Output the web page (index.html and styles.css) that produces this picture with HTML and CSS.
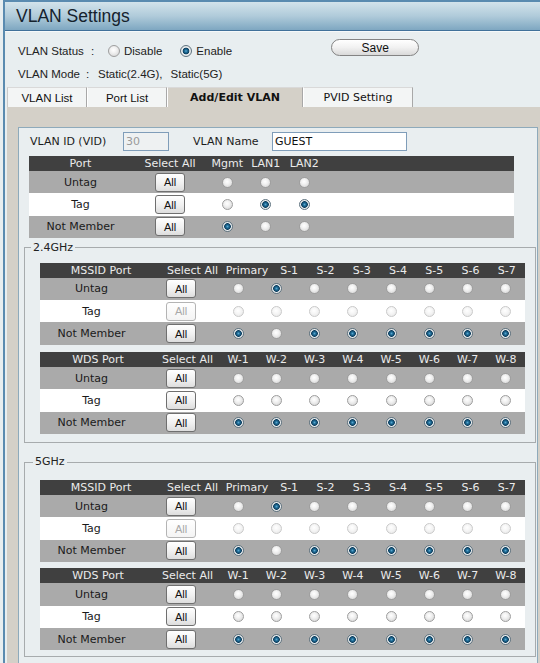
FILE: index.html
```html
<!DOCTYPE html>
<html>
<head>
<meta charset="utf-8">
<title>VLAN Settings</title>
<link rel="stylesheet" href="styles.css">
</head>
<body>
<div class="page">
  <div class="titlebar"><h1 class="title">VLAN Settings</h1></div>

  <div class="status">
    <div class="srow">
      <span class="slabel">VLAN Status</span><span class="colon">:</span>
      <label class="opt"><input type="radio" class="rd rd-lg"><span class="opt-txt">Disable</span></label>
      <label class="opt"><input type="radio" class="rd rd-lg" checked><span class="opt-txt">Enable</span></label>
      <button class="save">Save</button>
    </div>
    <div class="srow2">
      <span class="slabel2">VLAN Mode</span><span class="colon2">:</span>
      <span class="mode">Static(2.4G),</span><span class="mode mode2">Static(5G)</span>
    </div>
  </div>

  <div class="tabs">
    <div class="tab tab-first w80">VLAN List</div>
    <div class="tab w80">Port List</div>
    <div class="tab tab-active w136">Add/Edit VLAN</div>
    <div class="tab tab-pvid w110">PVID Setting</div>
  </div>

  <div class="panel">
    <div class="box">
      <div class="frow">
        <span class="flbl">VLAN ID (VID)</span>
        <input class="in in-id" type="text" value="30" disabled>
        <span class="flbl flbl2">VLAN Name</span>
        <input class="in in-name" type="text" value="GUEST">
      </div>

      <div class="tbl tbl-port">
        <div class="grid hdr cols-port">
          <span>Port</span><span>Select All</span><span>Mgmt</span><span>LAN1</span><span>LAN2</span><span></span>
        </div>
        <div class="grid row cols-port">
          <span class="lbl">Untag</span><button class="all">All</button>
          <input type="radio" class="rd"><input type="radio" class="rd"><input type="radio" class="rd">
        </div>
        <div class="grid row alt cols-port">
          <span class="lbl">Tag</span><button class="all">All</button>
          <input type="radio" class="rd"><input type="radio" class="rd" checked><input type="radio" class="rd" checked>
        </div>
        <div class="grid row cols-port">
          <span class="lbl">Not Member</span><button class="all">All</button>
          <input type="radio" class="rd" checked><input type="radio" class="rd"><input type="radio" class="rd">
        </div>
      </div>

      <fieldset class="band">
        <legend class="legend">2.4GHz</legend>
        <div class="tbl">
          <div class="grid hdr cols-mh">
            <span>MSSID Port</span><span>Select All</span><span>Primary</span><span>S-1</span><span>S-2</span><span>S-3</span><span>S-4</span><span>S-5</span><span>S-6</span><span>S-7</span>
          </div>
          <div class="grid row cols-body">
            <span class="lbl">Untag</span><button class="all">All</button>
            <input type="radio" class="rd"><input type="radio" class="rd" checked><input type="radio" class="rd"><input type="radio" class="rd"><input type="radio" class="rd"><input type="radio" class="rd"><input type="radio" class="rd"><input type="radio" class="rd">
          </div>
          <div class="grid row alt cols-body">
            <span class="lbl">Tag</span><button class="all" disabled>All</button>
            <input type="radio" class="rd" disabled><input type="radio" class="rd" disabled><input type="radio" class="rd" disabled><input type="radio" class="rd" disabled><input type="radio" class="rd" disabled><input type="radio" class="rd" disabled><input type="radio" class="rd" disabled><input type="radio" class="rd" disabled>
          </div>
          <div class="grid row cols-body">
            <span class="lbl">Not Member</span><button class="all">All</button>
            <input type="radio" class="rd" checked><input type="radio" class="rd"><input type="radio" class="rd" checked><input type="radio" class="rd" checked><input type="radio" class="rd" checked><input type="radio" class="rd" checked><input type="radio" class="rd" checked><input type="radio" class="rd" checked>
          </div>
        </div>
        <div class="tbl tbl-wds">
          <div class="grid hdr cols-wh">
            <span>WDS Port</span><span>Select All</span><span>W-1</span><span>W-2</span><span>W-3</span><span>W-4</span><span>W-5</span><span>W-6</span><span>W-7</span><span>W-8</span>
          </div>
          <div class="grid row cols-body">
            <span class="lbl">Untag</span><button class="all">All</button>
            <input type="radio" class="rd"><input type="radio" class="rd"><input type="radio" class="rd"><input type="radio" class="rd"><input type="radio" class="rd"><input type="radio" class="rd"><input type="radio" class="rd"><input type="radio" class="rd">
          </div>
          <div class="grid row alt cols-body">
            <span class="lbl">Tag</span><button class="all">All</button>
            <input type="radio" class="rd"><input type="radio" class="rd"><input type="radio" class="rd"><input type="radio" class="rd"><input type="radio" class="rd"><input type="radio" class="rd"><input type="radio" class="rd"><input type="radio" class="rd">
          </div>
          <div class="grid row cols-body">
            <span class="lbl">Not Member</span><button class="all">All</button>
            <input type="radio" class="rd" checked><input type="radio" class="rd" checked><input type="radio" class="rd" checked><input type="radio" class="rd" checked><input type="radio" class="rd" checked><input type="radio" class="rd" checked><input type="radio" class="rd" checked><input type="radio" class="rd" checked>
          </div>
        </div>
      </fieldset>

      <fieldset class="band band-5g">
        <legend class="legend legend-5g">5GHz</legend>
        <div class="tbl">
          <div class="grid hdr cols-mh">
            <span>MSSID Port</span><span>Select All</span><span>Primary</span><span>S-1</span><span>S-2</span><span>S-3</span><span>S-4</span><span>S-5</span><span>S-6</span><span>S-7</span>
          </div>
          <div class="grid row cols-body">
            <span class="lbl">Untag</span><button class="all">All</button>
            <input type="radio" class="rd"><input type="radio" class="rd" checked><input type="radio" class="rd"><input type="radio" class="rd"><input type="radio" class="rd"><input type="radio" class="rd"><input type="radio" class="rd"><input type="radio" class="rd">
          </div>
          <div class="grid row alt cols-body">
            <span class="lbl">Tag</span><button class="all" disabled>All</button>
            <input type="radio" class="rd" disabled><input type="radio" class="rd" disabled><input type="radio" class="rd" disabled><input type="radio" class="rd" disabled><input type="radio" class="rd" disabled><input type="radio" class="rd" disabled><input type="radio" class="rd" disabled><input type="radio" class="rd" disabled>
          </div>
          <div class="grid row cols-body">
            <span class="lbl">Not Member</span><button class="all">All</button>
            <input type="radio" class="rd" checked><input type="radio" class="rd"><input type="radio" class="rd" checked><input type="radio" class="rd" checked><input type="radio" class="rd" checked><input type="radio" class="rd" checked><input type="radio" class="rd" checked><input type="radio" class="rd" checked>
          </div>
        </div>
        <div class="tbl tbl-wds tbl-wds-5g">
          <div class="grid hdr cols-wh">
            <span>WDS Port</span><span>Select All</span><span>W-1</span><span>W-2</span><span>W-3</span><span>W-4</span><span>W-5</span><span>W-6</span><span>W-7</span><span>W-8</span>
          </div>
          <div class="grid row cols-body">
            <span class="lbl">Untag</span><button class="all">All</button>
            <input type="radio" class="rd"><input type="radio" class="rd"><input type="radio" class="rd"><input type="radio" class="rd"><input type="radio" class="rd"><input type="radio" class="rd"><input type="radio" class="rd"><input type="radio" class="rd">
          </div>
          <div class="grid row alt cols-body">
            <span class="lbl">Tag</span><button class="all">All</button>
            <input type="radio" class="rd"><input type="radio" class="rd"><input type="radio" class="rd"><input type="radio" class="rd"><input type="radio" class="rd"><input type="radio" class="rd"><input type="radio" class="rd"><input type="radio" class="rd">
          </div>
          <div class="grid row cols-body">
            <span class="lbl">Not Member</span><button class="all">All</button>
            <input type="radio" class="rd" checked><input type="radio" class="rd" checked><input type="radio" class="rd" checked><input type="radio" class="rd" checked><input type="radio" class="rd" checked><input type="radio" class="rd" checked><input type="radio" class="rd" checked><input type="radio" class="rd" checked>
          </div>
        </div>
      </fieldset>
    </div>
  </div>
</div>
</body>
</html>
```

FILE: styles.css
```css
html, body {
  margin: 0;
  padding: 0;
  overflow: hidden;
}
body {
  background: #e8eef0;
  font-family: "Liberation Sans", Arial, sans-serif;
  color: #1c1c1c;
}
.page {
  margin-left: 3px;
  width: 535px;
  height: 663px;
  border-left: 2px solid #5a8bb0;
  border-top: 2px solid #5a8bb0;
  overflow: hidden;
}
.titlebar {
  height: 28px;
  background: linear-gradient(#d3e3eb, #b0cbda 50%, #7ea7c1);
  border-bottom: 1px solid #41719a;
  box-shadow: 0 1px 0 #f6f9fa;
  padding-left: 11px;
  display: flex;
  align-items: center;
}
.title {
  margin: 0;
  font-weight: normal;
  font-size: 17.5px;
  font-family: "Liberation Sans", Arial, sans-serif;
  color: #15222d;
}

/* status area */
.status {
  padding-left: 13px;
  font-size: 11.5px;
  color: #222;
}
.srow {
  display: flex;
  align-items: center;
  height: 18px;
  margin-top: 11px;
}
.slabel { width: 73px; white-space: nowrap; }
.colon { width: 17px; }
.opt {
  display: flex;
  align-items: center;
  margin-right: 18px;
}
.opt-txt { margin-left: 4px; }
.save {
  align-self: flex-start;
  margin-top: -3px;
  margin-left: 81px;
  width: 88px;
  height: 17px;
  padding: 0;
  border: 1px solid #838383;
  border-radius: 9px;
  background: linear-gradient(#ffffff, #f1f1f1 50%, #d9d9d9);
  font-family: "Liberation Sans", Arial, sans-serif;
  font-size: 12px;
  color: #111;
}
.srow2 {
  display: flex;
  align-items: center;
  height: 16px;
  margin-top: 6px;
}
.slabel2 { width: 68px; white-space: nowrap; }
.colon2 { width: 12px; }
.mode2 { margin-left: 8px; }

/* tabs */
.tabs {
  display: flex;
  margin-left: 2px;
  margin-top: 5px;
  height: 20px;
}
.tab {
  box-sizing: border-box;
  height: 20px;
  display: flex;
  align-items: center;
  justify-content: center;
  background: #f3f5f5;
  border-top: 1px solid #d9d9d9;
  border-left: 1px solid #ffffff;
  border-right: 1px solid #a8a8a8;
  font-size: 11.5px;
  color: #111;
}
.tab-first { border-left: 1px solid #c9c9c9; }
.tab-active {
  background: #d4d0c8;
  font-family: "DejaVu Sans", Verdana, sans-serif;
  font-weight: bold;
  font-size: 11px;
}
.tab-pvid {
  font-family: "DejaVu Sans", Verdana, sans-serif;
  font-size: 11px;
}
.w80 { width: 80px; }
.w136 { width: 136px; }
.w110 { width: 110px; }

/* panel */
.panel {
  margin-left: 2px;
  background: #d4d0c8;
  padding: 20px 0 0 11px;
  height: 600px;
}
.box {
  width: 520px;
  box-sizing: border-box;
  border: 1px solid #8eaabb;
  background: #e9eef0;
  padding: 4px 0 12px;
  font-family: "DejaVu Sans", Verdana, sans-serif;
  font-size: 11px;
  color: #1c1c1c;
}
.frow {
  display: flex;
  align-items: center;
  height: 19px;
  margin-left: 11px;
  margin-bottom: 5px;
}
.flbl { width: 93px; white-space: nowrap; }
.flbl2 { margin-left: 24px; width: 79px; }
.in {
  box-sizing: border-box;
  height: 19px;
  border: 1px solid #7f9db9;
  font-family: "DejaVu Sans", Verdana, sans-serif;
  font-size: 11px;
  padding: 0 2px;
  margin: 0;
}
.in-id {
  width: 46px;
  background: #eef1f2;
  color: #9a9a9a;
}
.in-name {
  width: 135px;
  background: #fff;
  color: #111;
}

/* tables */
.tbl { width: 485px; }
.tbl-port { margin-left: 10px; }
.tbl-wds { margin-top: 7px; }
.tbl-wds-5g { margin-top: 6px; }
.grid { display: grid; width: 485px; }
.hdr {
  height: 15px;
  line-height: 15px;
  background: #404040;
  color: #ebebeb;
  text-align: center;
  white-space: nowrap;
}
.row {
  height: 22.4px;
  align-items: center;
  background: #aaaaaa;
}
.row.alt { background: #ffffff; }
.lbl {
  text-align: center;
  color: #1a1a1a;
  white-space: nowrap;
}
.cols-port { grid-template-columns: 103px 76px 38.5px 38.5px 38.5px 1fr; }
.cols-body { grid-template-columns: 103px 76px repeat(8, 1fr); }
.cols-mh { grid-template-columns: 122px 61px 48px repeat(7, 1fr); }
.cols-wh { grid-template-columns: 116px 63px repeat(8, 1fr); }

.all {
  justify-self: center;
  width: 30px;
  height: 19px;
  padding: 0;
  border: 1px solid #6f6f6f;
  border-radius: 3px;
  background: linear-gradient(#ffffff, #f0f0f0 55%, #dddddd);
  font-family: "Liberation Sans", Arial, sans-serif;
  font-size: 11px;
  color: #111;
}
.all:disabled {
  color: #a8a8a8;
  border-color: #b4b4b4;
  background: linear-gradient(#ffffff, #f4f4f4);
}

/* radios */
.rd {
  -webkit-appearance: none;
  appearance: none;
  justify-self: center;
  margin: 0;
  width: 11px;
  height: 11px;
  box-sizing: border-box;
  border-radius: 50%;
  border: 1px solid #9e9e9e;
  background: radial-gradient(circle at 45% 40%, #ffffff 0, #f2f2f2 35%, #cfcfcf 100%);
}
.rd:checked {
  border-color: #5f7380;
  background: radial-gradient(circle at 50% 50%, #5aa6cf 0, #1d6b95 1.5px, #0e3e5e 3px, #eef1f2 3.7px, #d2d2d2 100%);
}
.rd:disabled {
  border-color: #cacaca;
  background: radial-gradient(circle at 45% 40%, #ffffff 0, #f6f6f6 40%, #e4e4e4 100%);
}
.rd-lg {
  width: 12px;
  height: 12px;
}

/* fieldsets */
.band {
  margin: 2.5px 1px 0 5px;
  border: 1px solid #a7abad;
  padding: 8px 0 8px 15px;
  min-width: 0;
}
.band-5g {
  margin-top: 12px;
  padding-top: 11px;
  padding-bottom: 6px;
}
.legend {
  margin-left: -9px;
  padding: 0 2px;
  line-height: 14px;
  font-size: 11px;
  color: #222;
}
.legend-5g { margin-left: -7px; }
```
